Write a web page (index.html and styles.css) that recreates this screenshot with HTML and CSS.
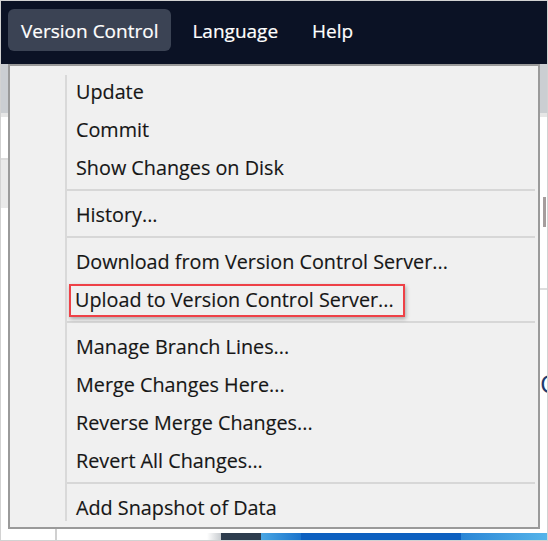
FILE: index.html
```html
<!DOCTYPE html>
<html lang="en">
<head>
<meta charset="utf-8">
<title>Version Control menu</title>
<link rel="stylesheet" href="styles.css">
</head>
<body>
<div class="frame">
  <header class="menubar">
    <div class="bar-item active">Version Control</div>
    <div class="bar-item">Language</div>
    <div class="bar-item">Help</div>
  </header>
  <div class="toolbar"></div>
  <div class="workspace">
    <aside class="sidebar">
      <div class="side-gap"></div>
      <div class="side-row"></div>
    </aside>
    <main class="main">
      <div class="main-body">
        <div class="edge">
          <div class="edge-scroll"><span class="tick"></span><span class="thumb"></span></div>
          <div class="edge-line"></div>
          <div class="edge-glyph">C</div>
        </div>
      </div>
      <div class="statusstrip">
        <span class="fade"></span><span class="dark"></span><span class="blue1"></span><span class="blue2"></span><span class="blue3"></span>
      </div>
    </main>
  </div>

  <nav class="menu">
    <ul class="menu-list">
      <li class="item">Update</li>
      <li class="item">Commit</li>
      <li class="item">Show Changes on Disk</li>
      <li class="sep"></li>
      <li class="item">History...</li>
      <li class="sep"></li>
      <li class="item">Download from Version Control Server...</li>
      <li class="item highlight"><span class="mark">Upload to Version Control Server...</span></li>
      <li class="sep"></li>
      <li class="item">Manage Branch Lines...</li>
      <li class="item">Merge Changes Here...</li>
      <li class="item">Reverse Merge Changes...</li>
      <li class="item">Revert All Changes...</li>
      <li class="sep"></li>
      <li class="item">Add Snapshot of Data</li>
    </ul>
  </nav>
</div>
</body>
</html>
```
FILE: styles.css
```css
* { box-sizing: border-box; }
html, body { margin: 0; padding: 0; background: #ffffff; }
body { font-family: "Open Sans", "Noto Sans", "Liberation Sans", sans-serif; }

.frame {
  position: relative;
  width: 548px;
  height: 541px;
  border: 1px solid #d2d2d2;
  overflow: hidden;
  display: flex;
  flex-direction: column;
  background: #ffffff;
}

.menubar {
  height: 63px;
  flex: none;
  background: #0b1225;
  display: flex;
  gap: 8px;
  padding: 8px 0 0 7px;
  align-items: flex-start;
}
.bar-item {
  color: #ffffff;
  font-size: 19px;
  line-height: 39px;
  padding: 3px 13px 0;
  height: 42px;
  border-radius: 6px;
  white-space: nowrap;
  -webkit-text-stroke: 0.2px #ffffff;
}
.bar-item.active { background: #3b4354; }

.toolbar {
  height: 53px;
  flex: none;
  background: #cbced2;
  border-bottom: 4px solid #e6e6e6;
}

.workspace {
  flex: 1;
  display: flex;
  min-height: 0;
}
.sidebar {
  width: 56px;
  flex: none;
  border-right: 2px solid #d0d0d0;
  display: flex;
  flex-direction: column;
}
.side-gap { height: 41px; }
.side-row {
  height: 50px;
  background: #e9e9e9;
  border-top: 2px solid #dcdcdc;
}

.main {
  flex: 1;
  display: flex;
  flex-direction: column;
}
.main-body {
  flex: 1;
  display: flex;
  justify-content: flex-end;
}
.edge {
  width: 8px;
  display: flex;
  flex-direction: column;
  padding-top: 80px;
}
.edge-scroll {
  height: 30px;
  display: flex;
  gap: 2px;
}
.tick { width: 1px; height: 12px; background: #9cc6ec; margin-top: 2px; }
.thumb { width: 3px; height: 30px; margin-left: 1px; background: #a59d9d; }
.edge-line {
  margin-top: 61px;
  height: 2px;
  background: #dddddd;
}
.edge-glyph {
  margin-top: 80px;
  margin-left: 1px;
  font-size: 26px;
  line-height: 26px;
  color: #1f3b6e;
}

.statusstrip {
  height: 7px;
  flex: none;
  display: flex;
}
.statusstrip .fade { width: 164px; background: linear-gradient(90deg, #ffffff 0, #ffffff 150px, #c8ccd0 164px); }
.statusstrip .dark { width: 40px; background: #2e3d4e; }
.statusstrip .blue1 { width: 40px; background: linear-gradient(90deg, #49a6e3, #1b74cc); }
.statusstrip .blue2 { width: 160px; background: #0d60c0; }
.statusstrip .blue3 { flex: 1; background: linear-gradient(90deg, #2a86d6, #55b4ea); }

/* dropdown menu overlay */
.menu {
  position: absolute;
  left: 7px;
  top: 63px;
  width: 532px;
  height: 465px;
  border: 2px solid #9a9a9a;
  background: #f0f0f0;
  padding: 7px 3px 0 55px;
}
.menu::before {
  content: "";
  position: absolute;
  left: 55px;
  top: 9px;
  bottom: 6px;
  width: 2px;
  background: #d9d9d9;
}
.menu-list {
  list-style: none;
  margin: 0;
  padding: 0 0 0 2px;
}
.item {
  height: 38px;
  line-height: 38px;
  font-size: 19.8px;
  color: #161616;
  padding-left: 9px;
  white-space: nowrap;
  -webkit-text-stroke: 0.15px #161616;
}
.sep {
  height: 2px;
  margin: 2px 0 5px;
  background: #d7d7d7;
}
.item.highlight {
  display: flex;
  align-items: center;
}
.mark {
  display: block;
  line-height: 28px;
  height: 33px;
  padding: 0 9px 0 4px;
  margin-left: -7px;
  border: 2.5px solid #ee4147;
  box-shadow: 1px 2px 4px rgba(0, 0, 0, 0.3);
}
```
